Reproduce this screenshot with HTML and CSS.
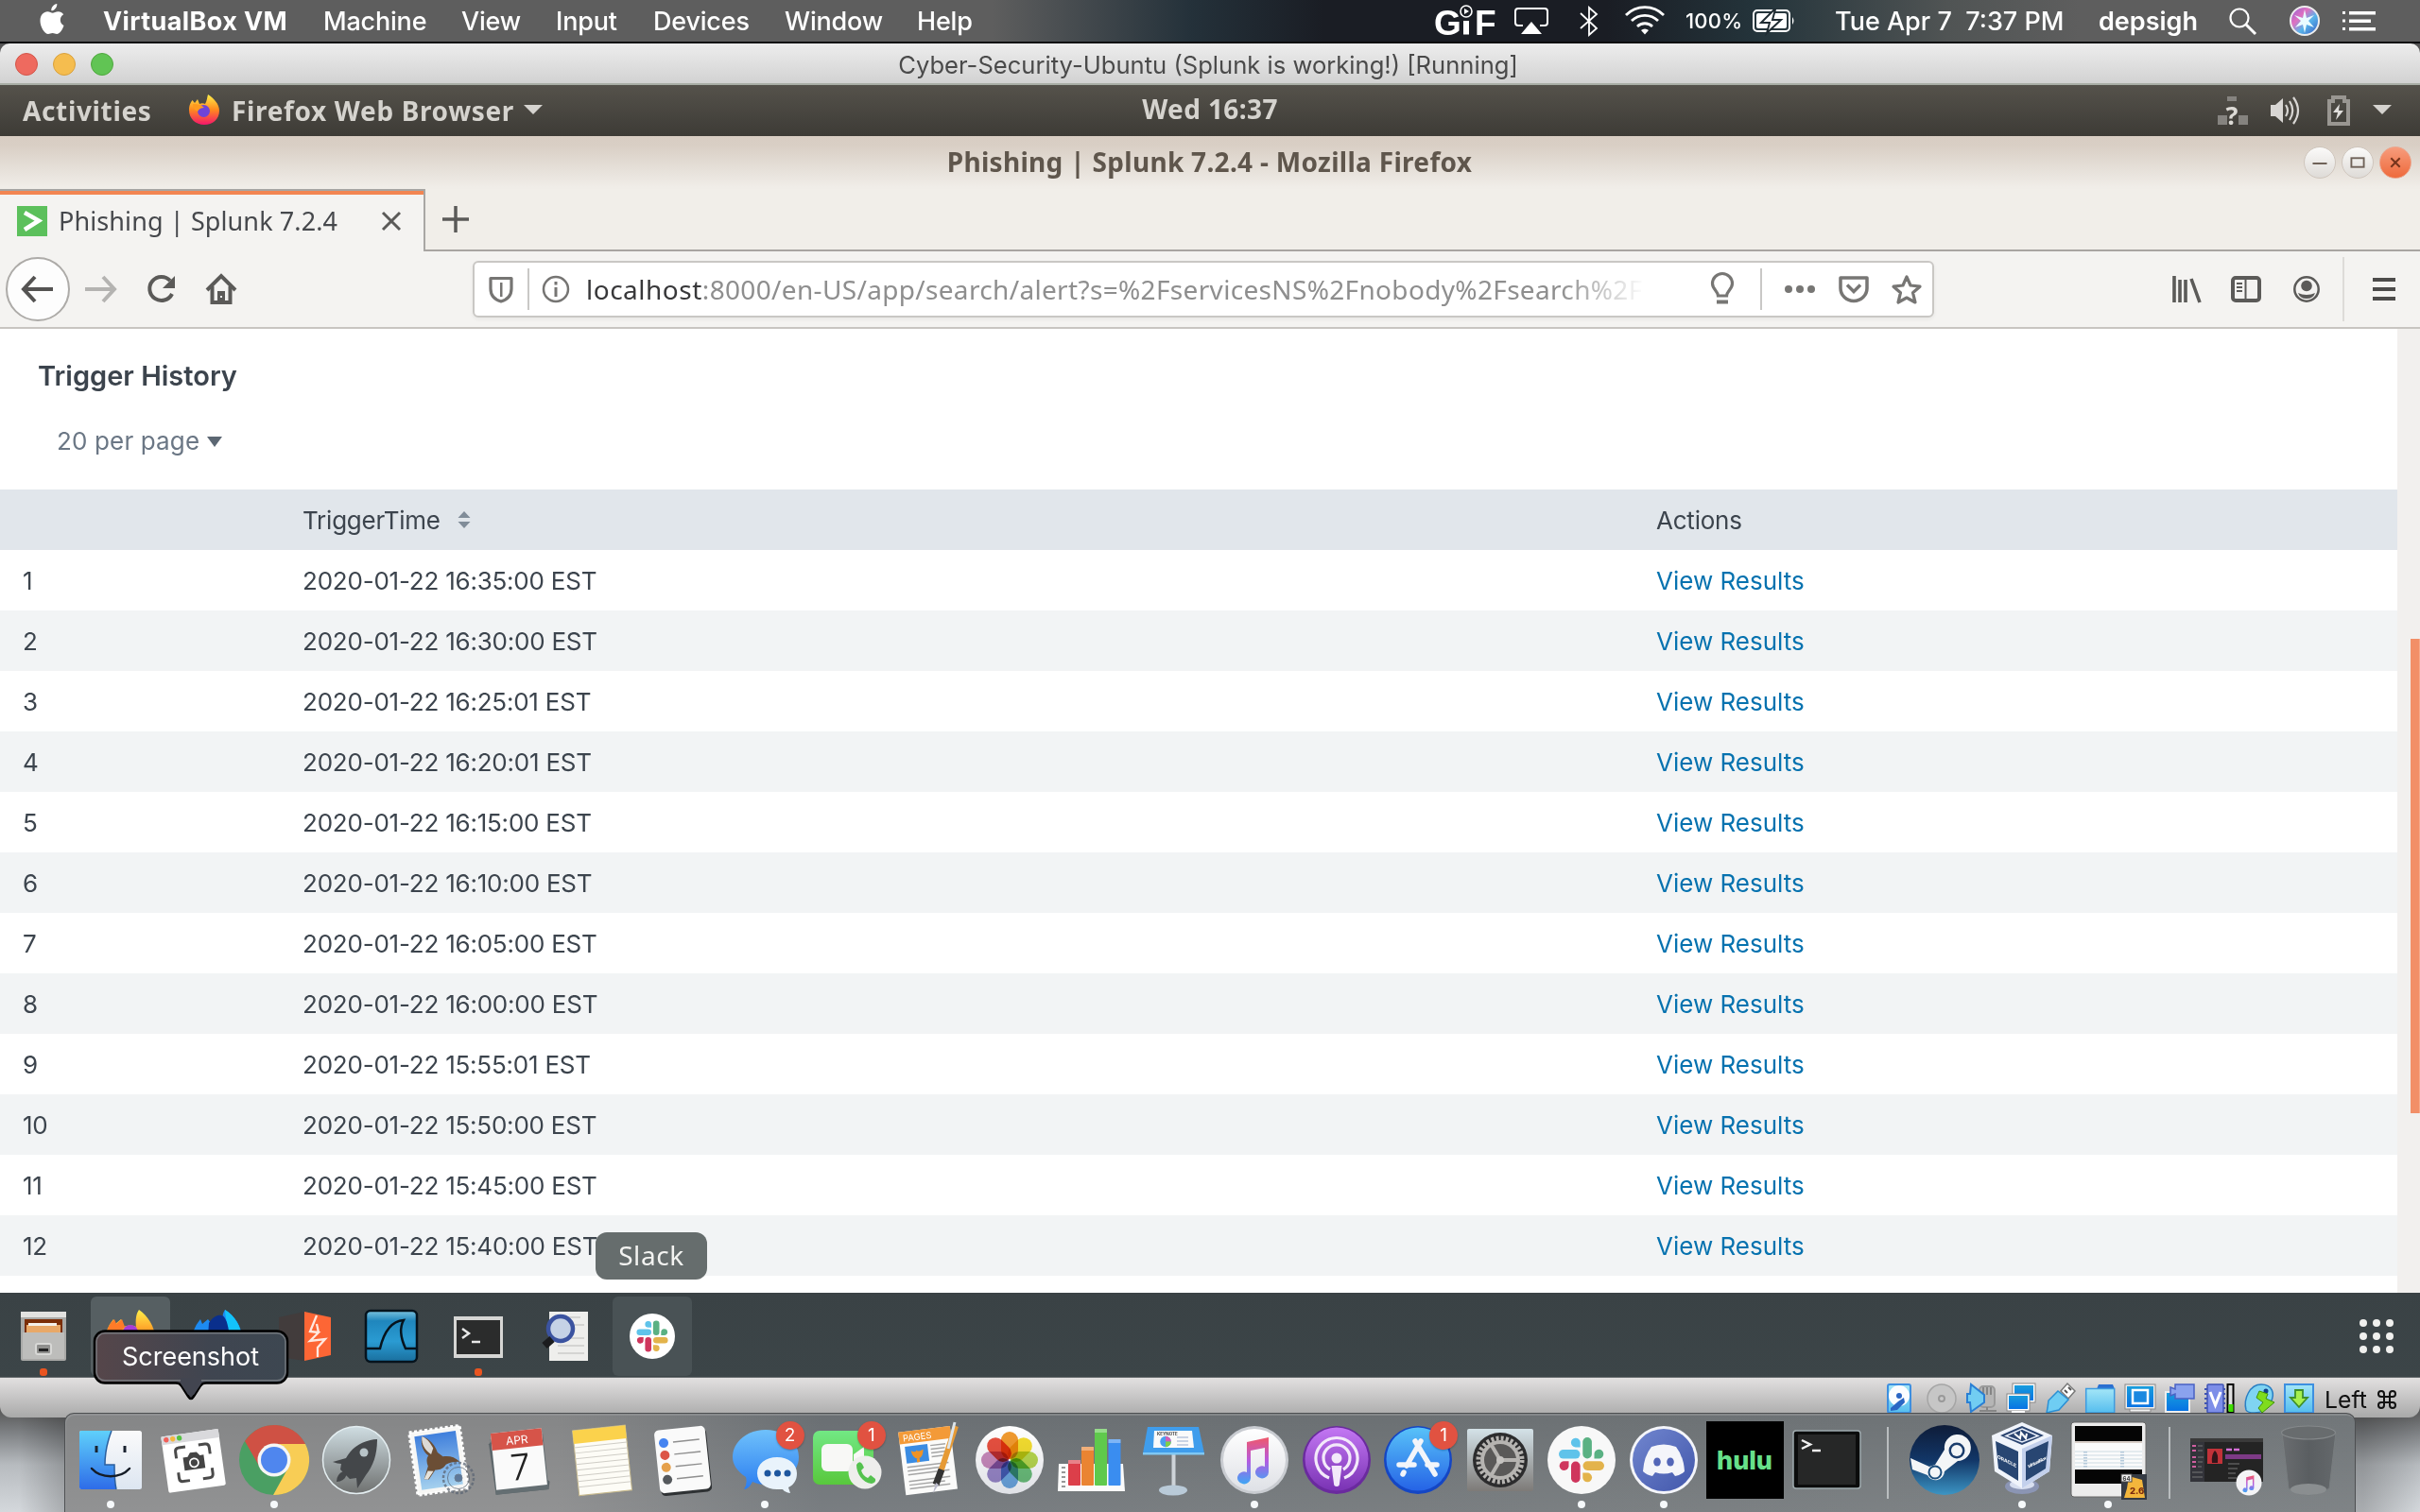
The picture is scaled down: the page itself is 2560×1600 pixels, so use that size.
FILE: index.html
```html
<!DOCTYPE html>
<html lang="en">
<head>
<meta charset="utf-8">
<title>Phishing | Splunk 7.2.4</title>
<link rel="stylesheet" href="styles.css">
</head>
<body>
<svg width="0" height="0" class="defs">
  <defs>
    <linearGradient id="gBlue" x1="0" y1="0" x2="0" y2="1"><stop offset="0" stop-color="#6fc1fb"/><stop offset="1" stop-color="#2b7df0"/></linearGradient>
    <linearGradient id="gFinder" x1="0" y1="0" x2="0" y2="1"><stop offset="0" stop-color="#5fd0fb"/><stop offset="1" stop-color="#2e6ce8"/></linearGradient>
    <linearGradient id="gFace" x1="0" y1="0" x2="0" y2="1"><stop offset="0" stop-color="#fafafb"/><stop offset="1" stop-color="#dde6f1"/></linearGradient>
    <linearGradient id="gRocket" x1="0" y1="0" x2="0" y2="1"><stop offset="0" stop-color="#cfdde2"/><stop offset="1" stop-color="#6f7170"/></linearGradient>
    <linearGradient id="gGreen" x1="0" y1="0" x2="0" y2="1"><stop offset="0" stop-color="#72e884"/><stop offset="1" stop-color="#58c83c"/></linearGradient>
    <linearGradient id="gPurple" x1="0" y1="0" x2="0" y2="1"><stop offset="0" stop-color="#c377f3"/><stop offset="1" stop-color="#7a33b4"/></linearGradient>
    <linearGradient id="gStore" x1="0" y1="0" x2="0" y2="1"><stop offset="0" stop-color="#58c2f9"/><stop offset="1" stop-color="#2563e6"/></linearGradient>
    <linearGradient id="gMetal" x1="0" y1="0" x2="0" y2="1"><stop offset="0" stop-color="#d4e2e8"/><stop offset="1" stop-color="#7d7a77"/></linearGradient>
    <linearGradient id="gWhite" x1="0" y1="0" x2="0" y2="1"><stop offset="0" stop-color="#ffffff"/><stop offset="1" stop-color="#dfe1e6"/></linearGradient>
    <linearGradient id="gNote" x1="0" y1="0" x2="0" y2="1"><stop offset="0" stop-color="#f0586a"/><stop offset=".5" stop-color="#b55ae0"/><stop offset="1" stop-color="#3ea6f5"/></linearGradient>
    <linearGradient id="gDiscord" x1="0" y1="0" x2="1" y2="1"><stop offset="0" stop-color="#7186cf"/><stop offset="1" stop-color="#4257ab"/></linearGradient>
    <linearGradient id="gSteam" x1="0" y1="0" x2="0" y2="1"><stop offset="0" stop-color="#0e1c38"/><stop offset=".5" stop-color="#123667"/><stop offset="1" stop-color="#3c95c4"/></linearGradient>
    <linearGradient id="gFox" x1="0" y1="0" x2="0" y2="1"><stop offset="0" stop-color="#fff04a"/><stop offset=".5" stop-color="#ff8a1e"/><stop offset="1" stop-color="#f5156c"/></linearGradient>
    <linearGradient id="gShark" x1="0" y1="0" x2="0" y2="1"><stop offset="0" stop-color="#7cc4e0"/><stop offset=".2" stop-color="#1f86bd"/><stop offset=".6" stop-color="#2a9bd2"/><stop offset="1" stop-color="#1a6f9e"/></linearGradient>
    <linearGradient id="gScreen" x1="0" y1="0" x2="0" y2="1"><stop offset="0" stop-color="#1a9fdc"/><stop offset="1" stop-color="#0670e4"/></linearGradient>
    <linearGradient id="gSky" x1="0" y1="0" x2="0" y2="1"><stop offset="0" stop-color="#a4e6f7"/><stop offset="1" stop-color="#55bdee"/></linearGradient>
    <linearGradient id="gStamp" x1="0" y1="0" x2="0" y2="1"><stop offset="0" stop-color="#3f7fdc"/><stop offset="1" stop-color="#a4d0ee"/></linearGradient>
    <linearGradient id="gTrash" x1="0" y1="0" x2="1" y2="0"><stop offset="0" stop-color="#6a6d70"/><stop offset=".5" stop-color="#5a5e61"/><stop offset="1" stop-color="#64686b"/></linearGradient>
    <linearGradient id="gTip" x1="0" y1="0" x2="1" y2="0"><stop offset="0" stop-color="#56464a"/><stop offset=".6" stop-color="#3f4550"/><stop offset="1" stop-color="#3d4751"/></linearGradient>
    <linearGradient id="gSiri" x1="0" y1="0" x2="1" y2="1"><stop offset="0" stop-color="#8a63d8"/><stop offset=".35" stop-color="#e070c0"/><stop offset=".6" stop-color="#58b4ea"/><stop offset="1" stop-color="#3757c0"/></linearGradient>
    <g id="slackMark">
      <g fill="#5fc3ea"><path d="M-1.300-13.500v-5.500a4.900 4.900 0 1 0-4.900 5.500z"/><rect x="-24" y="-11" width="22.500" height="9.600" rx="4.800"/></g>
      <g fill="#5ab183"><rect x="1.300" y="-24" width="9.600" height="22.500" rx="4.800"/><path d="M13.500-1.500h5.500a4.900 4.900 0 1 0-5.500-4.900z"/></g>
      <g fill="#e3b34b"><rect x="1.500" y="1.300" width="22.500" height="9.600" rx="4.800"/><path d="M1.300 13.500v5.500a4.900 4.900 0 1 0 4.900-5.500z"/></g>
      <g fill="#cf365d"><rect x="-11" y="1.500" width="9.600" height="22.500" rx="4.800"/><path d="M-13.500 1.300h-5.500a4.900 4.900 0 1 0 5.500 4.900z"/></g>
    </g>
    <g id="noteMark"><path d="M-8-19L15-24V13a7 6.500 0 1 1-4-6V-13L-4-10V19a7 6.500 0 1 1-4-6z" fill="url(#gNote)"/></g>
  </defs>
</svg>

<div class="screen">
  <header class="menubar">
    <svg class="apple" viewBox="0 0 26 32"><path d="M17.800 0c.3 3.800-3 7.500-6 7.300C11.400 3.800 14.600.400 17.800 0zM25 23c-1.800 5.300-4.700 9-7.300 9-1.800 0-2.600-1-4.600-1s-3 1-4.600 1C4.700 32 0 24.500 0 18c0-6.300 4-9.700 7.800-9.700 2.200 0 4 1.400 5.400 1.400 1.300 0 3.400-1.500 6-1.500 2 0 4.200 1 5.500 3-5 3-4 9.800.3 11.800z"/></svg>
    <nav>
      <span class="app">VirtualBox VM</span><span class="m2">Machine</span><span class="m3">View</span><span class="m4">Input</span><span class="m5">Devices</span><span class="m6">Window</span><span>Help</span>
    </nav>
    <div class="extras">
      <svg class="gif" viewBox="0 0 64 44"><text x="-1" y="36.500" class="giftext" textLength="27">G</text><text x="42" y="36.500" class="giftext">F</text><path d="M30 22h6v14.500h-6z"/><circle cx="33" cy="12" r="6" fill="none" stroke="#fff" stroke-width="1.600"/><path d="M31 9l5 3-5 3z"/></svg>
      <svg class="airplay" viewBox="0 0 36 44"><path d="M9 27H4a3 3 0 0 1-3-3V12a3 3 0 0 1 3-3h28a3 3 0 0 1 3 3v12a3 3 0 0 1-3 3h-5" fill="none" stroke="#fff" stroke-width="2"/><path d="M18 23l11 13H7z"/></svg>
      <svg class="bt" viewBox="0 0 20 44"><path d="M1 14l17 16-8 7V8l8 7L1 30" fill="none" stroke="#fff" stroke-width="1.800"/></svg>
      <svg class="wifi" viewBox="0 0 42 44"><g fill="none" stroke="#fff" stroke-width="2.800"><path d="M1 16a28 28 0 0 1 40 0"/><path d="M7 22a20 20 0 0 1 28 0"/><path d="M13 28a11.500 11.500 0 0 1 16 0"/></g><path d="M17 32a6 6 0 0 1 8 0l-4 4.500z"/></svg>
      <span class="pct">100%</span>
      <svg class="batt" viewBox="0 0 46 44"><rect x="1" y="11" width="38" height="22" rx="4" fill="none" stroke="#fff" stroke-width="2"/><path d="M42 18q3 4 0 8z"/><rect x="4" y="14" width="32" height="16" rx="2"/><path d="M23 10L9 24h9l-3 11 15-14h-9l3-11z" stroke="#1f2b32" stroke-width="2"/></svg>
      <span class="clock">Tue Apr 7&nbsp; 7:37 PM</span>
      <span class="user">depsigh</span>
      <svg class="find" viewBox="0 0 30 44"><circle cx="11" cy="19" r="9.500" fill="none" stroke="#fff" stroke-width="2.200"/><path d="M18 26l10 10" stroke="#fff" stroke-width="3"/></svg>
      <svg class="siri" viewBox="0 0 34 44"><circle cx="17" cy="22" r="15" fill="url(#gSiri)" stroke="#eee" stroke-width="2"/><path d="M17 10l2 9 8-3-6 6 6 7-8-3-2 9-2-9-8 3 6-7-7-6 9 3z" fill="#eafcff"/></svg>
      <svg class="list" viewBox="0 0 36 44"><path d="M0 12h3v3H0zM7 12h28v3.500H7zM0 20.500h3v3H0zM7 20.500h23v3.500H7zM0 29h3v3H0zM7 29h28v3.500H7z"/></svg>
    </div>
  </header>

  <div class="vmwin">
    <div class="vmtitle">
      <div class="lights"><i class="red"></i><i class="yel"></i><i class="grn"></i></div>
      <span>Cyber-Security-Ubuntu (Splunk is working!) [Running]</span>
    </div>

    <div class="topbar">
      <div class="tl">
        <span class="act">Activities</span>
        <svg class="fxs" viewBox="0 0 32 32"><path d="M16 32C7 32 0 25.500 0 16.500 0 11 2 8 3.500 6l2.500 3 3-4 2 5c2-1 4-1 6 0 2-3 2-7 3-10 6 4 12 10 12 17 0 9-7 15-16 15z" fill="url(#gFox)"/><circle cx="15.500" cy="17.500" r="6.500" fill="#6f44d8"/><path d="M4 10q8 0 12 4-5 0-7 4-5-2-5-8z" fill="#ff9a1e"/></svg>
        <span class="fxn">Firefox Web Browser</span>
        <svg class="tri" viewBox="0 0 20 10"><path d="M0 0h20L10 10z"/></svg>
      </div>
      <span class="tc">Wed 16:37</span>
      <div class="tr">
        <svg width="32" height="32" viewBox="0 0 32 32"><path d="M10 1h10v5H10zM0 21h10v10H0zM22 21h10v10H22z" fill="#85837f"/><text x="8.500" y="31" class="q">?</text></svg>
        <svg width="32" height="32" viewBox="0 0 32 32"><path d="M0 10h5l8-7v26l-8-7H0z" fill="#d8d6d3"/><g fill="none" stroke="#d8d6d3" stroke-width="2.200"><path d="M16 10q4 6 0 12"/><path d="M20 6q6.500 10 0 20"/><path d="M24 2q10 14 0 28"/></g></svg>
        <svg width="24" height="32" viewBox="0 0 24 32"><path d="M2 6h4V2h12v4h4v24H2z" fill="none" stroke="#999691" stroke-width="4"/><path d="M13 9L6 18h5l-2 8 8-10h-5z" fill="#e0dedb"/></svg>
        <svg class="tri" viewBox="0 0 20 10"><path d="M0 0h20L10 10z"/></svg>
      </div>
    </div>

    <div class="fftitle">
      <span>Phishing | Splunk 7.2.4 - Mozilla Firefox</span>
      <div class="wbtns">
        <svg viewBox="0 0 34 34" class="wb"><path d="M9 18h16" stroke="#6f6258" stroke-width="2"/></svg>
        <svg viewBox="0 0 34 34" class="wb"><rect x="10" y="12" width="14" height="10" fill="none" stroke="#6f6258" stroke-width="2"/></svg>
        <svg viewBox="0 0 34 34" class="wb close"><path d="M12 12l10 10M22 12L12 22" stroke="#76341c" stroke-width="2.200"/></svg>
      </div>
    </div>

    <div class="tabs">
      <div class="tab">
        <svg width="32" height="32" viewBox="0 0 32 32"><path d="M0 0h32v32H0z" fill="#5cc05c"/><path d="M8 7l15 8.500L8 25" fill="none" stroke="#fff" stroke-width="4.500"/></svg>
        <span>Phishing | Splunk 7.2.4</span>
        <svg width="20" height="20" viewBox="0 0 20 20"><path d="M1 1l18 18M19 1L1 19" stroke="#5b5a58" stroke-width="3"/></svg>
      </div>
      <div class="newtab"><svg width="28" height="28" viewBox="0 0 28 28"><path d="M14 0v28M0 14h28" stroke="#5b5a58" stroke-width="3.500"/></svg></div>
    </div>

    <div class="toolbar">
      <div class="back"><svg width="34" height="28" viewBox="0 0 34 28"><path d="M14 1L2 14l12 13M2 14h31" fill="none" stroke="#545352" stroke-width="4"/></svg></div>
      <svg class="fwd" viewBox="0 0 34 28"><path d="M20 1l12 13-12 13M32 14H1" fill="none" stroke="#b4b3b1" stroke-width="4"/></svg>
      <svg class="reload" viewBox="0 0 32 32"><path d="M25 7a12.500 12.500 0 1 0 2 14" fill="none" stroke="#5b5a58" stroke-width="4"/><path d="M30 2v13H17z" fill="#5b5a58"/></svg>
      <svg class="home" viewBox="0 0 34 32"><path d="M2 17L17 2l15 15" fill="none" stroke="#5b5a58" stroke-width="4"/><path d="M7.500 13v17h19V13" fill="none" stroke="#5b5a58" stroke-width="4"/><path d="M13 18h8v12h-8z" fill="#5b5a58"/><path d="M16 23h2v2h-2z" fill="#eee"/></svg>
      <div class="url">
        <svg class="shield" viewBox="0 0 26 30"><path d="M2 3.500h22v11C24 21 20 26 13 28 6 26 2 21 2 14.500z" fill="none" stroke="#767573" stroke-width="3.200" stroke-linejoin="round"/><path d="M12 8h2.500v15H12z" fill="#767573"/></svg>
        <i class="usep"></i>
        <svg class="info" viewBox="0 0 30 30"><circle cx="15" cy="15" r="13" fill="none" stroke="#767573" stroke-width="2.500"/><path d="M13.500 7h3v3.500h-3zM13.500 13h3v10h-3z" fill="#767573"/></svg>
        <div class="addr"><b>localhost</b>:8000/en-US/app/search/alert?s=%2FservicesNS%2Fnobody%2Fsearch%2F</div>
        <svg class="bulb" viewBox="0 0 26 34"><path d="M8.500 24c0-5-6-7-6-13a10.500 10.500 0 0 1 21 0c0 6-6 8-6 13z" fill="none" stroke="#777674" stroke-width="3.200"/><path d="M7 28.500h12v4H7z" fill="#777674"/></svg>
        <i class="usep"></i>
        <svg class="dots" viewBox="0 0 32 10"><g fill="#777674"><circle cx="4" cy="5" r="4"/><circle cx="16" cy="5" r="4"/><circle cx="28" cy="5" r="4"/></g></svg>
        <svg class="pocket" viewBox="0 0 32 28"><path d="M2 2h28v11a14 13.500 0 0 1-28 0z" fill="none" stroke="#777674" stroke-width="3.500" stroke-linejoin="round"/><path d="M9 9.500l7 7 7-7" fill="none" stroke="#777674" stroke-width="3.500"/></svg>
        <svg class="star" viewBox="0 0 32 32"><path d="M16 3l4 9 10 1.200-7.500 6.500L25 30l-9-5-9 5 2.500-10.300L2 13.200 12 12z" fill="none" stroke="#777674" stroke-width="3.200" stroke-linejoin="round"/></svg>
      </div>
      <div class="tools">
        <svg width="32" height="28" viewBox="0 0 32 28"><path d="M2 0v28M8 4v24M14 4v24M20 3l9 25" stroke="#5b5a58" stroke-width="3.600"/></svg>
        <svg width="32" height="28" viewBox="0 0 32 28"><rect x="2" y="2" width="28" height="24" rx="3" fill="none" stroke="#5b5a58" stroke-width="4"/><path d="M15.500 2v24M6 8h6M6 12h6M6 16h6" stroke="#5b5a58" stroke-width="2"/></svg>
        <svg width="28" height="28" viewBox="0 0 28 28"><circle cx="14" cy="14" r="12.700" fill="none" stroke="#5b5a58" stroke-width="2.500"/><circle cx="14" cy="10.500" r="5.800" fill="#5b5a58"/><path d="M5 18q4 2 9 2t9-2q-2 6-9 6t-9-6z" fill="#5b5a58"/></svg>
        <i class="tsep"></i>
        <svg width="24" height="24" viewBox="0 0 24 24"><path d="M0 2h24M0 12h24M0 22h24" stroke="#4c4b4a" stroke-width="4"/></svg>
      </div>
    </div>

    <div class="page">
      <main>
        <h3>Trigger History</h3>
        <div class="perpage">20 per page<svg width="16" height="12" viewBox="0 0 16 12"><path d="M0 1h16L8 12z"/></svg></div>
        <div class="row head"><span></span><span>TriggerTime<svg width="14" height="18" viewBox="0 0 14 18"><path d="M7 0l6.500 7H.500zM7 18l6.500-7H.500z" fill="#818d99"/></svg></span><span>Actions</span></div>
        <div class="row"><span>1</span><span>2020-01-22 16:35:00 EST</span><a>View Results</a></div>
        <div class="row"><span>2</span><span>2020-01-22 16:30:00 EST</span><a>View Results</a></div>
        <div class="row"><span>3</span><span>2020-01-22 16:25:01 EST</span><a>View Results</a></div>
        <div class="row"><span>4</span><span>2020-01-22 16:20:01 EST</span><a>View Results</a></div>
        <div class="row"><span>5</span><span>2020-01-22 16:15:00 EST</span><a>View Results</a></div>
        <div class="row"><span>6</span><span>2020-01-22 16:10:00 EST</span><a>View Results</a></div>
        <div class="row"><span>7</span><span>2020-01-22 16:05:00 EST</span><a>View Results</a></div>
        <div class="row"><span>8</span><span>2020-01-22 16:00:00 EST</span><a>View Results</a></div>
        <div class="row"><span>9</span><span>2020-01-22 15:55:01 EST</span><a>View Results</a></div>
        <div class="row"><span>10</span><span>2020-01-22 15:50:00 EST</span><a>View Results</a></div>
        <div class="row"><span>11</span><span>2020-01-22 15:45:00 EST</span><a>View Results</a></div>
        <div class="row"><span>12</span><span>2020-01-22 15:40:00 EST</span><a>View Results</a></div>
      </main>
      <aside class="scroll"><i></i></aside>
    </div>

    <div class="udock">
      <div class="slot run"><svg width="52" height="56" viewBox="-26 -28 52 56"><rect x="-24" y="-26" width="48" height="52" rx="2" fill="#a9a9a7"/><rect x="-24" y="-26" width="48" height="6" fill="#e2e2e0"/><rect x="-20" y="-18" width="40" height="14" fill="#7a2e08"/><path d="M-18-12h36v8h-36z" fill="#e8a868"/><path d="M-16-14h30v3h-30z" fill="#f3f0ea"/><rect x="-22" y="-4" width="44" height="28" fill="#bdbdbb"/><rect x="-8" y="8" width="16" height="11" rx="2" fill="#8f8f8d" stroke="#d8d8d6" stroke-width="2"/><path d="M-5 13H5v3H-5z" fill="#222"/></svg></div>
      <div class="slot on"><svg width="52" height="56" viewBox="-26 -28 52 56"><path d="M0 26C-15 26-26 16-26 1c0-8 4-14 8-19l2 5 6-5 3 8C-3-12 3-12 6-10 5-17 6-24 9-28 18-22 26-10 26 2 26 16 15 26 0 26z" fill="url(#gFox)"/><path d="M-24-5c0-6 4-10 7-13l2 5 6-5 3 8-8 8z" fill="#ff7b28"/><circle cx="0" cy="-4" r="8" fill="#a63bd8"/></svg></div>
      <div class="slot"><svg width="52" height="56" viewBox="-26 -28 52 56"><path d="M0 26C-15 26-26 16-26 1c0-8 4-14 8-19l2 5 6-5 3 4C0-20 3-20 6-19 5-22 6-25 8-28 18-22 26-10 26 2 26 16 15 26 0 26z" fill="#1d8bf2"/><path d="M-9-14C-3-24 6-24 8-19L18 0H-10z" fill="#0a2f8c"/><path d="M8-28C18-22 26-10 25 2L12 4C14-8 8-16 8-28z" fill="#13c3fa"/></svg></div>
      <div class="slot"><svg width="56" height="56" viewBox="-28 -28 56 56"><path d="M-27-20L0-26v52l-27-4z" fill="#423c3c"/><path d="M0-26L28-20V20L0 26z" fill="#fd6635"/><path d="M13-22L6-5l9 1-9 9 16-2-8 9v10M15-4l-2-9" fill="none" stroke="#ffe8df" stroke-width="2.300"/></svg></div>
      <div class="slot"><svg width="60" height="60" viewBox="-30 -30 60 60"><rect x="-27" y="-27" width="54" height="54" rx="5" fill="url(#gShark)" stroke="#06131d" stroke-width="2.500"/><path d="M-27 13h15C-8-4 0-16 13-17 9-10 9 0 15 13h12" fill="none" stroke="#06131d" stroke-width="2.500"/></svg></div>
      <div class="slot run"><svg width="54" height="48" viewBox="-27 -24 54 48"><rect x="-26" y="-21" width="52" height="44" fill="#d6d6d4"/><rect x="-23" y="-17" width="46" height="36" fill="#2b2c2c"/><path d="M-17-8l7 5-7 5M-7 6H2" fill="none" stroke="#e8e8e8" stroke-width="2.500"/></svg></div>
      <div class="slot"><svg width="56" height="56" viewBox="-28 -28 56 56"><rect x="-17" y="-26" width="41" height="52" fill="#eeeeec"/><path d="M-8-20h24M-8-12h28M0 2h20M-8 10h28M-8 18h28" stroke="#d4d4d2" stroke-width="2"/><circle cx="-5" cy="-8" r="13" fill="#c5d2e6" stroke="#3b53a0" stroke-width="4.500"/><path d="M-14 3l-8 7" stroke="#1b1c1e" stroke-width="8"/></svg></div>
      <div class="slot hov"><svg width="52" height="52" viewBox="-26 -26 52 52"><circle r="24" fill="#fff"/><use href="#slackMark" transform="scale(.69)"/></svg><span class="tip">Slack</span></div>
      <svg class="apps" viewBox="0 0 36 36"><g fill="#f0f0ee"><circle cx="4" cy="4" r="4"/><circle cx="18" cy="4" r="4"/><circle cx="32" cy="4" r="4"/><circle cx="4" cy="18" r="4"/><circle cx="18" cy="18" r="4"/><circle cx="32" cy="18" r="4"/><circle cx="4" cy="32" r="4"/><circle cx="18" cy="32" r="4"/><circle cx="32" cy="32" r="4"/></g></svg>
    </div>

    <div class="status">
      <svg viewBox="0 0 32 32"><rect x="1" y="1" width="24" height="30" rx="2" fill="url(#gSky)" stroke="#3d8fe0" stroke-width="2"/><circle cx="13" cy="13" r="11" fill="#fbfdff"/><circle cx="13" cy="13" r="3" fill="#2a66c4"/><path d="M4 26l8-7 6-4 1 5-8 8-7 1z" fill="#2a66c4"/></svg>
      <svg viewBox="0 0 32 32"><circle cx="16" cy="16" r="15" fill="#c6c6c6" stroke="#a5a5a5" stroke-width="1.500"/><circle cx="16" cy="16" r="3" fill="#c9c9c9" stroke="#999" stroke-width="2"/></svg>
      <svg viewBox="0 0 32 32"><rect x="14" y="3" width="16" height="22" rx="4" fill="#b5b5b5" stroke="#9a9a9a" stroke-width="2"/><path d="M18 4v8M22 4v8M26 4v8M14 29h18M22 25v4" stroke="#858585" stroke-width="2"/><path d="M1 11h3L5 1 19 12v8L5 30 4 20H1z" fill="#72cdf2" stroke="#2a7fd4" stroke-width="2"/></svg>
      <svg viewBox="0 0 32 32"><rect x="8" y="1" width="22" height="18" fill="url(#gScreen)" stroke="#fff" stroke-width="2"/><rect x="7" y="0" width="24" height="20" fill="none" stroke="#888"/><rect x="2" y="12" width="22" height="16" fill="url(#gScreen)" stroke="#fff" stroke-width="2"/><rect x="1" y="11" width="24" height="18" fill="none" stroke="#888"/><path d="M6 29h14v3H6z" fill="#fff"/></svg>
      <svg viewBox="0 0 32 32"><path d="M16 8l7-8 8 8-7 8z" fill="#fff" stroke="#777" stroke-width="1.500"/><path d="M20 7l3 3M24 4l3 3" stroke="#555" stroke-width="2"/><path d="M13 8l11 9-10 11-9 2-4 1 1-5 1-8z" fill="#6fcdf3" stroke="#2a8fd4" stroke-width="1.500"/></svg>
      <svg viewBox="0 0 32 32"><path d="M12 6l2-5h15l2 5z" fill="#2a6fd0"/><rect x=".7" y="5.500" width="30" height="25.500" fill="url(#gSky)" stroke="#3d9be0" stroke-width="1.500"/></svg>
      <svg viewBox="0 0 32 32"><path d="M5 25h22v5H5z" fill="#f2f2f2" stroke="#888"/><rect x="1" y="2" width="30" height="24" fill="url(#gScreen)" stroke="#eee" stroke-width="2"/><rect x="0" y="1" width="32" height="26" fill="none" stroke="#888"/><rect x="8" y="7" width="16" height="14" fill="#1a88e0" stroke="#fff" stroke-width="2.500"/></svg>
      <svg viewBox="0 0 32 32"><rect x="1" y="9" width="25" height="21" fill="url(#gScreen)" stroke="#eee" stroke-width="2"/><path d="M6 4l5 2V1h20v15H11v-5l-5 2z" fill="#8aa2ee" stroke="#4a62c4" stroke-width="1.500"/></svg>
      <svg viewBox="0 0 32 32"><path d="M0 6h22M0 11h22M0 16h22M0 21h22M0 26h22" stroke="#3f53b4" stroke-width="2"/><rect x="3" y="1" width="17" height="30" rx="1" fill="#7d8ee8" stroke="#3f53b4" stroke-width="1.500"/><path d="M6 9l5.500 14L17 9" fill="none" stroke="#fff" stroke-width="3"/><rect x="24.500" y="1" width="6" height="29" fill="#e0e0e0" stroke="#000" stroke-width="2"/><path d="M25.500 22h5v8h-5z" fill="#3fe000"/></svg>
      <svg viewBox="0 0 32 32"><path d="M2 28C-1 16 6 1 18 1s15 10 10 19-12 11-17 11-8-1-9-3z" fill="#7fd4f2" stroke="#2a7fc4" stroke-width="1.500"/><circle cx="23" cy="8" r="2.500" fill="#123f8c"/><path d="M16 8l9 3-2 5 9 4-13 11-4-5 5-6-7-5z" fill="#7fdc1e" stroke="#3f8f0a"/></svg>
      <svg viewBox="0 0 32 32"><rect x="1" y="1" width="30" height="30" fill="url(#gSky)" stroke="#3d8fe0" stroke-width="2"/><path d="M12 7h8v8h5l-9 10-9-10h5z" fill="#a6f04e" stroke="#3f8f2a" stroke-width="1.800"/></svg>
      <span>Left</span>
      <svg class="cmd" viewBox="0 0 20 20"><path d="M7 7h6v6H7zM7 7H4a3 3 0 1 1 3-3zM13 7V4a3 3 0 1 1 3 3zM13 13h3a3 3 0 1 1-3 3zM7 13v3a3 3 0 1 1-3-3z" fill="none" stroke="#111" stroke-width="2"/></svg>
    </div>
  </div>

  <div class="dock">
    <div class="cell run"><svg viewBox="-43 -49 86 104"><rect x="-33" y="-31" width="66" height="62" rx="2.500" fill="url(#gFace)"/><path d="M1-31C-4-18-6-6-6 5H4c0 9 0 17 2 26h-37a2 2 0 0 1-2-2v-58a2 2 0 0 1 2-2z" fill="url(#gFinder)"/><path d="M1-31C-4-18-6-6-6 5H4c0 9 0 17 2 26" fill="none" stroke="#2b5f9e" stroke-width="1.500"/><path d="M-15-15v7M15-15v7" stroke="#1a2330" stroke-width="3"/><path d="M-20 9C-10 20 10 20 20 9" fill="none" stroke="#151c26" stroke-width="2.500" stroke-linecap="round"/></svg></div>
    <div class="cell"><svg viewBox="-43 -49 86 104"><g transform="rotate(-8)"><rect x="-30" y="-29" width="61" height="60" rx="2" fill="#fff"/><path d="M-30-29h61v9h-61z" fill="#d9d9dc"/><circle cx="-25" cy="-25" r="2.700" fill="#f1605a"/><circle cx="-18" cy="-25" r="2.700" fill="#f5b83f"/><circle cx="-11" cy="-25" r="2.700" fill="#55c242"/><path d="M-17-4v-7q0-4 4-4h7M8-15h7q4 0 4 4v7M19 11v6q0 4-4 4H8M-6 21h-7q-4 0-4-4v-6" fill="none" stroke="#4a4a4a" stroke-width="3"/><path d="M-10-4h5l3-4h7l3 4h4v14h-22z" fill="#444"/><circle cx="1" cy="3" r="4.500" fill="#444" stroke="#fff" stroke-width="1.800"/></g></svg></div>
    <div class="cell run"><svg viewBox="-43 -49 86 104"><circle r="37" fill="#4a9f63"/><path d="M-31-20A37 37 0 0 1 33-17H0A17 17 0 0 0-15 8z" fill="#cf5144"/><path d="M33-17A37 37 0 0 1-1 37L15 8A17 17 0 0 0 3-17z" fill="#f8cd55"/><circle r="17.500" fill="#f6f6f4"/><circle r="14" fill="#4f86ee"/></svg></div>
    <div class="cell"><svg viewBox="-43 -49 86 104"><circle r="35.500" fill="url(#gRocket)" stroke="#e4eef1" stroke-width="1.500"/><path d="M22-22C6-21-5-13-11-2l-14 4q5 2 9 2l-1 6 10 10 7-1 1 11 9-14C18 6 22-6 22-22z" fill="#44474a"/><circle cx="8" cy="-8" r="4.500" fill="#b8c4c8"/><path d="M-14 12q-7 3-7 11 8 0 11-8z" fill="#44474a"/></svg></div>
    <div class="cell"><svg viewBox="-43 -49 86 104"><g transform="rotate(-8)"><rect x="-26" y="-33" width="54" height="67" fill="#f7f7f5" stroke="#fff" stroke-width="3" stroke-dasharray="3 2.500"/><rect x="-21" y="-28" width="44" height="57" fill="url(#gStamp)"/><path d="M-13-27c7 3 12 10 14 19l5 5c7 0 12 2 17 8-6-1-11-1-15 1-3 4-8 5-12 4l-8 9-5-1 6-13c-1-4-1-8 2-11-5-5-7-13-4-21z" fill="#6b4e35"/><path d="M-13-27c5 3 8 8 10 14l-3 6c-6-5-9-12-7-20z" fill="#dcdad6"/><path d="M-12 10l6 1-7 8-4-1z" fill="#e6e2da"/></g><g fill="none" stroke="#5c6674" opacity=".75"><circle cx="22" cy="19" r="16" stroke-width="2.500" stroke-dasharray="3 2"/><circle cx="22" cy="19" r="11.500"/><circle cx="22" cy="19" r="4" fill="#4a5f80"/></g></svg></div>
    <div class="cell"><svg viewBox="-43 -49 86 104"><g transform="rotate(-6)"><path d="M-30-20l6-6 54 52-2 8h-56z" fill="#5b6468"/><rect x="-28" y="-25" width="56" height="59" fill="#646e72"/><rect x="-27" y="-31" width="54" height="60" fill="#fafafa"/><path d="M-27-31h54v18h-54z" fill="#d65449"/><text class="apr" x="0" y="-17">APR</text><text class="seven" x="1" y="21">7</text></g></svg></div>
    <div class="cell"><svg viewBox="-43 -49 86 104"><g transform="rotate(-6)"><rect x="-27" y="-34" width="56" height="69" fill="#fdfcf6" stroke="#c7b98c"/><path d="M-27-34h56v14h-56z" fill="#fbd24c"/><path d="M-27-16h56M-27-10h56M-27-4h56M-27 2h56M-27 8h56M-27 14h56M-27 20h56M-27 26h56" stroke="#cfcdc6"/></g></svg></div>
    <div class="cell"><svg viewBox="-43 -49 86 104"><g transform="rotate(-6)"><rect x="-26" y="-31" width="54" height="67" rx="5" fill="#2f3234"/><rect x="-27" y="-34" width="54" height="67" rx="5" fill="#fafafa"/><circle cx="-18" cy="-20" r="5" fill="#4584f0"/><circle cx="-18" cy="-7" r="5" fill="#dc5547"/><circle cx="-18" cy="6" r="5" fill="#e5a04b"/><circle cx="-18" cy="19" r="5" fill="#55595d"/><path d="M-8-20h28M-8-7h28M-8 6h28M-8 19h28" stroke="#8f8f8f" stroke-width="1.500"/></g></svg></div>
    <div class="cell run"><svg viewBox="-43 -49 86 104"><path d="M1-32c20 0 35 13 35 29S21 26 1 26q-8 0-14-3-4 8-9 8 4-6 2-13C-29 12-34 5-34-3c0-16 15-29 35-29z" fill="url(#gBlue)"/><path d="M13-3c12 0 21 7 21 17 0 7-3 12-9 15l2 6q-6-1-8-4H13C1 31-8 24-8 14S1-3 13-3z" fill="#e9f3fb"/><circle cx="3" cy="14" r="3.500" fill="#1d569e"/><circle cx="13.500" cy="14" r="3.500" fill="#1d569e"/><circle cx="24" cy="14" r="3.500" fill="#1d569e"/></svg><em>2</em></div>
    <div class="cell"><svg viewBox="-43 -49 86 104"><rect x="-35" y="-31" width="64" height="57" rx="7" fill="url(#gGreen)"/><rect x="-26" y="-17" width="33" height="29" rx="6" fill="#f8f8f6"/><path d="M8-6l11-8v14H8z" fill="#f8f8f6"/><circle cx="20" cy="13" r="17.500" fill="#eeeeec"/><path d="M11 5q3-5 6-1l2 4-3 3q2 6 7 8l3-3 5 4q1 4-4 5C17 24 11 14 11 5z" fill="#55c24f"/></svg><em>1</em></div>
    <div class="cell"><svg viewBox="-43 -49 86 104"><g transform="rotate(-7)"><rect x="-28" y="-33" width="55" height="67" fill="#fbfbfa"/><path d="M-28-33h55v13h-55z" fill="#f39a38"/><text class="pgs" x="-24" y="-22.500">PAGES</text><rect x="-23" y="-17" width="24" height="18" fill="#3b8ce2"/><path d="M-17-12q5 3 6 0 2 3 7 0-1 9-6 9-6 0-7-9zM-12-3h3v4h-3z" fill="#f09325"/><path d="M4-15h16M4-11h15M4-7h16M4-3h12M-23 5h44M-23 9h40M-23 13h44M-23 20h44M-23 24h38M-23 28h43" stroke="#a5a5a5" stroke-width="1.500"/></g><path d="M29-36L12 16" stroke="#e69a35" stroke-width="6"/><path d="M28-40L21-12" stroke="#dce4ea" stroke-width="3"/><path d="M14 10L8 26" stroke="#333" stroke-width="7"/><path d="M8 24l-3 11 6-9z" fill="#bbc"/></svg></div>
    <div class="cell"><svg viewBox="-43 -49 86 104"><circle r="36" fill="url(#gWhite)"/><g class="petals"><rect x="-9" y="-30" width="18" height="29" rx="9" fill="#f29b2f"/><rect x="-9" y="-30" width="18" height="29" rx="9" transform="rotate(45)" fill="#f4dd2f"/><rect x="-9" y="-30" width="18" height="29" rx="9" transform="rotate(90)" fill="#b8d84e"/><rect x="-9" y="-30" width="18" height="29" rx="9" transform="rotate(135)" fill="#6cc07b"/><rect x="-9" y="-30" width="18" height="29" rx="9" transform="rotate(180)" fill="#6da8e0"/><rect x="-9" y="-30" width="18" height="29" rx="9" transform="rotate(225)" fill="#9a88c8"/><rect x="-9" y="-30" width="18" height="29" rx="9" transform="rotate(270)" fill="#c98abb"/><rect x="-9" y="-30" width="18" height="29" rx="9" transform="rotate(315)" fill="#e8503f"/></g></svg></div>
    <div class="cell"><svg viewBox="-43 -49 86 104"><path d="M-34 4h68l2 29h-71z" fill="#fbfbfb"/><path d="M-31 8h4M-31 13h4M-31 18h4M-31 23h4M-31 28h4" stroke="#777" stroke-width="1.500"/><rect x="-24" y="0" width="13" height="27" rx="1" fill="#dc3f4a"/><rect x="-10" y="-14" width="13" height="41" rx="1" fill="#ea8432"/><rect x="4" y="-33" width="13" height="60" rx="1" fill="#5fc94c"/><rect x="18.500" y="-22" width="13" height="49" rx="1" fill="#3a8df0"/><path d="M-24 0h13v4h-13zM-10-14H3v4h-13zM4-33h13v4H4zM18.500-22h13v4h-13z" fill="#fff" opacity=".35"/></svg></div>
    <div class="cell"><svg viewBox="-43 -49 86 104"><path d="M-1.500-10h4v42h-4z" fill="#cdd3d8"/><ellipse cx="0" cy="32" rx="15" ry="5.500" fill="#b9cad8"/><path d="M-27-35h54l6 28h-65z" fill="#3f9dec"/><path d="M-32-8h65v2.500h-65z" fill="#7fc8f4"/><path d="M-20-31h40l2 18h-43z" fill="#fafafa"/><text class="key" x="-17" y="-26">KEYNOTE</text><circle cx="-8" cy="-19.500" r="5.800" fill="#4a9ff0"/><path d="M-8-19.500v-5.800a5.800 5.800 0 0 1 5.800 5.800z" fill="#d35fb8"/><path d="M-8-19.500h5.800a5.800 5.800 0 0 1-5.800 5.800z" fill="#7fcf4a"/><path d="M4-24h12M4-20h12M4-16h12" stroke="#b9c6dd" stroke-width="1.500"/></svg></div>
    <div class="cell run"><svg viewBox="-43 -49 86 104"><circle r="36" fill="#c9ccd1"/><circle r="33" fill="url(#gWhite)"/><use href="#noteMark"/></svg></div>
    <div class="cell"><svg viewBox="-43 -49 86 104"><circle r="36" fill="#6a2a9e"/><circle cy="-1" r="33.500" fill="url(#gPurple)"/><g fill="none" stroke="#f3e9fa" stroke-width="3.200"><path d="M-8 19A22 22 0 1 1 8 19"/><path d="M-7 10A14 14 0 1 1 7 10"/></g><circle cy="-2" r="5.500" fill="#f3e9fa"/><path d="M-5.500 6h11L3 25a3 3 0 0 1-6 0z" fill="#f3e9fa"/></svg></div>
    <div class="cell"><svg viewBox="-43 -49 86 104"><circle r="36" fill="#1446c4"/><circle cy="-1" r="33.500" fill="url(#gStore)"/><g stroke="#f2f5fa" stroke-width="5.500" stroke-linecap="round"><path d="M3-20L-12 6M-3-20L18 15M-20 5h16M10 5h10M-15 13l-1 2"/></g></svg><em>1</em></div>
    <div class="cell"><svg viewBox="-43 -49 86 104"><rect x="-35" y="-33" width="70" height="66" rx="2" fill="url(#gMetal)"/><circle r="29" fill="#2c2c2d"/><circle r="23" fill="none" stroke="#b6b4b1" stroke-width="5" stroke-dasharray="3 2.160"/><circle r="19" fill="#5a5958" stroke="#b6b4b1" stroke-width="4"/><path d="M0 0h19M0 0l-10-17M0 0l-10 17" stroke="#b6b4b1" stroke-width="4"/><circle r="4" fill="#c5c3c0"/></svg></div>
    <div class="cell run"><svg viewBox="-43 -49 86 104"><circle r="36" fill="#f8f8f8"/><use href="#slackMark"/></svg></div>
    <div class="cell run"><svg viewBox="-43 -49 86 104"><circle r="36" fill="#f4f5fa"/><circle r="33" fill="url(#gDiscord)"/><path d="M-13-14q13-5 26 0 8 10 9 26-4 4-10 5l-3-4q-9 3-18 0l-3 4q-6-1-10-5 1-16 9-26z" fill="#f4f5fa"/><ellipse cx="-7" cy="2" rx="3.800" ry="4.500" fill="#5366b8"/><ellipse cx="7" cy="2" rx="3.800" ry="4.500" fill="#5366b8"/></svg></div>
    <div class="cell"><svg viewBox="-43 -49 86 104"><rect x="-41" y="-41" width="82" height="82" fill="#000"/><text class="hulu" x="-30" y="10" textLength="59">hulu</text></svg></div>
    <div class="cell"><svg viewBox="-43 -49 86 104"><rect x="-35" y="-31" width="71" height="61" rx="3" fill="#0b0c0c" stroke="#9fabae" stroke-width="1.500"/><rect x="-30" y="-27" width="61" height="53" fill="#262727"/><path d="M-26-21l9 4.500-9 4.500M-15-10h9" fill="none" stroke="#f0f0f0" stroke-width="2.500"/></svg></div>
    <div class="cell dsep s1"><i></i></div>
    <div class="cell steam"><svg viewBox="-43 -49 86 104"><circle r="37" fill="url(#gSteam)"/><path d="M-36-2l20 9 6-2L0-11A14 14 0 1 1 14 1L0 12a9.500 9.500 0 0 1-18 4l-16-6z" fill="#f3f5f7"/><circle cx="13" cy="-10" r="8.500" fill="#1b3d6c"/><circle cx="13" cy="-10" r="6" fill="#f3f5f7"/><circle cx="-10" cy="13" r="6.500" fill="none" stroke="#1b4d7c" stroke-width="2"/></svg></div>
    <div class="cell run"><svg viewBox="-43 -49 86 104"><ellipse cx="0" cy="28" rx="18" ry="8" fill="#8b95b4"/><ellipse cx="0" cy="26" rx="13" ry="5" fill="#d8dff0"/><path d="M0-40l32 14-3 38L0 30-29 12l-3-38z" fill="#f0f4fb"/><path d="M0-12l32-14-3 38L0 30z" fill="#c3d0ec"/><path d="M0-36l23 10L0-16l-23-10z" fill="#2a4470"/><path d="M-28-20L-4-9v31L-25 9zM28-20L4-9v31L25 9z" fill="#284672"/><path d="M0-33l17 7.500L0-19l-17-6.500z" fill="none" stroke="#e8eefa" stroke-width="1.500"/><path d="M-8-28l6 5 1-6 5 6 1-5" fill="none" stroke="#fff" stroke-width="2"/><text class="vb" transform="matrix(1 .5 0 1 -26 -2)" textLength="20">ORACLE</text><text class="vb" transform="matrix(1 -.5 0 1 6 9)" textLength="20">VirtualBox</text></svg></div>
    <div class="cell mini run"><svg viewBox="-43 -49 86 104"><rect x="-39" y="-40" width="79" height="79" rx="3" fill="#ececec" stroke="#666" stroke-width="1"/><rect x="-35" y="-36" width="71" height="61" fill="#050505"/><path d="M-35-20h71V10h-71z" fill="#fbfbfb"/><path d="M-35-20h71v2h-71z" fill="#d9cfc8"/><path d="M-35-9h71M-35-5h71M-35-1h71M-35 3h71M-35 7h71" stroke="#dde6ec" stroke-width="1.500"/><path d="M-24-9V8M15-9V8" stroke="#b5cadb" stroke-width="4" stroke-dasharray="1.500 1.500"/><rect x="14" y="15" width="27" height="27" fill="#353b44"/><path d="M22 17l14 4 3 19H17l3-10z" fill="#f3b63c"/><rect x="14" y="15" width="11" height="8" fill="#eee" stroke="#444"/><text class="n64" x="15.500" y="21.500">64</text><text class="n26" x="23" y="36">2.6</text></svg></div>
    <div class="cell dsep s2"><i></i></div>
    <div class="cell"><svg viewBox="-43 -49 86 104"><rect x="-38" y="-23" width="77" height="46" fill="#242424"/><path d="M-38-23h15v46h-15z" fill="#33343a"/><path d="M-38-23h77v4h-77z" fill="#3a3a3a"/><rect x="-20" y="-12" width="16" height="16" fill="#c23239"/><path d="M-12-10q4 3 3 13h-6q-1-9 3-13z" fill="#32151a"/><path d="M-1-6h38v5H-1z" fill="#7d3a86"/><path d="M0-11h6M8-11h6" stroke="#d56fd8" stroke-width="2.500"/><path d="M-36-15h4M-36-10h4M-36-3h4M-36 2h4M-36 7h4" stroke="#d05fa0" stroke-width="2"/><path d="M-30-15h5M-30-10h5M-30-3h6M-30 2h5M-30 7h4M-36 13h11M-36 18h11M2 4h12M2 9h10M2 14h8M2 19h9" stroke="#777" stroke-width="1.200"/><circle cx="24" cy="24" r="13.500" fill="#f4f4f6"/><use href="#noteMark" transform="translate(24 25) scale(.36)"/></svg></div>
    <div class="cell"><svg viewBox="-43 -49 86 104"><path d="M-28-29q28 8 57 0L22 30q-22 14-43 0z" fill="url(#gTrash)" stroke="#787d7f"/><ellipse cx="0" cy="-29" rx="28.500" ry="7" fill="#686c6e" stroke="#85898b" stroke-width="1.200"/><ellipse cx="0" cy="31" rx="19" ry="6" fill="#8a8e90"/></svg></div>
  </div>

  <div class="shot">
    <svg width="208" height="76" viewBox="0 0 208 76"><path d="M13 1.500h182a11 11 0 0 1 11 11v33a11 11 0 0 1-11 11h-75q-4 0-6 3l-7 11q-3 5-6 0l-7-11q-2-3-6-3H13a11 11 0 0 1-11-11v-33a11 11 0 0 1 11-11z" fill="url(#gTip)" stroke="#000" stroke-width="2.500"/><path d="M13 3.800h182a9 9 0 0 1 9 9v32a9 9 0 0 1-9 9h-182a9 9 0 0 1-9-9v-32a9 9 0 0 1 9-9z" fill="none" stroke="#81858a" stroke-width="1.500" opacity=".8"/><path d="M93 51h22v6l-8 12h-6l-8-12z" fill="#424550"/></svg>
    <span>Screenshot</span>
  </div>
</div>
</body>
</html>
```
FILE: styles.css
```css
* { box-sizing: border-box; }
body { margin: 0; background: #999; }
.defs { position: absolute; }
svg { display: block; flex: none; overflow: visible; }
i { font-style: normal; display: block; flex: none; }

.screen {
  position: relative;
  width: 2560px;
  height: 1600px;
  overflow: hidden;
  font-family: Inter, sans-serif;
  background: linear-gradient(90deg, #0000 0, #0000 20px, #0003 70px, #0003 2500px, #0000 2560px),
              linear-gradient(#555 1490px, #7c7f82 1515px, #b7bbbf 1550px, #d4d8dc 1600px);
}

/* macOS menu bar */
.menubar {
  display: flex;
  align-items: center;
  height: 46px;
  padding: 0 46px 0 42px;
  color: #fff;
  font-size: 27px;
  font-weight: 500;
  border-bottom: 2px solid #0b0c0e;
  background: linear-gradient(90deg, #5e5e5e 0, #5e5e5e 1050px, #24313a 1260px, #1a1d24 1400px, #1a1d24 1700px, #24343b 1860px, #505454 2060px, #5e5e5e 2200px);
}
.menubar svg { fill: #fff; height: 44px; }
.menubar .apple { width: 27px; height: 32px; margin-top: -4px; }
.menubar nav { display: flex; margin-left: 40px; letter-spacing: -.2px; white-space: nowrap; }
.menubar nav .app { width: 233px; font-weight: 700; letter-spacing: .4px; }
.m2 { width: 146px; } .m3 { width: 100px; } .m4 { width: 103px; } .m5 { width: 139px; } .m6 { width: 140px; }
.extras { display: flex; align-items: center; margin-left: auto; white-space: nowrap; }
.giftext { font: 800 37px "Liberation Sans", sans-serif; }
.gif { width: 64px; margin-right: 20px; }
.airplay { width: 36px; margin-right: 33px; }
.bt { width: 20px; margin-right: 28px; }
.wifi { width: 42px; margin-right: 22px; }
.pct { width: 71px; font-size: 22px; letter-spacing: .2px; }
.batt { width: 46px; margin-right: 41px; }
.clock { width: 279px; }
.user { width: 138px; font-weight: 600; }
.find { width: 30px; margin-right: 33px; }
.siri { width: 34px; margin-right: 23px; }
.list { width: 36px; }

/* VM window */
.vmwin { border-radius: 10px 10px 12px 12px; overflow: hidden; height: 1454px; }
.vmtitle {
  display: grid;
  grid-template-columns: 1fr auto 1fr;
  align-items: center;
  height: 44px;
  padding: 2px 16px 0;
  color: #4a4a4a;
  font-size: 25.600px;
  background: linear-gradient(#ededed, #d2d2d2);
  border-bottom: 2px solid #a9aea6;
}
.vmtitle span { position: relative; left: -2px; }
.lights { display: flex; gap: 16px; margin-top: -1px; }
.lights i { width: 24px; height: 24px; border-radius: 50%; }
.red { background: #ee6a5f; border: 1px solid #d25549; }
.yel { background: #f5bd4f; border: 1px solid #d8a03c; }
.grn { background: #61c454; border: 1px solid #4fa73e; }

.topbar {
  display: grid;
  grid-template-columns: 1fr auto 1fr;
  align-items: center;
  height: 54px;
  padding: 0 30px 0 24px;
  font: 700 28px "Noto Sans", sans-serif;
  color: #d5d3ce;
  letter-spacing: .65px;
  background: linear-gradient(#55524b, #3d3b36);
}
.tl, .tr { display: flex; align-items: center; }
.act { width: 175px; }
.fxs { width: 32px; height: 32px; margin: -2px 13px 0 1px; }
.fxn { width: 309px; }
.tri { width: 20px; height: 10px; margin-top: -2px; fill: #d5d3cf; }
.tc { letter-spacing: .4px; position: relative; left: 3px; top: -2px; }
.tr { justify-content: flex-end; gap: 26px; }
.tr svg:nth-child(1) { margin-right: -2px; }
.tr svg:nth-child(2) { margin-right: 2px; }
.tr svg:nth-child(3) { margin-right: -2px; }
.q { font: 700 27px "Noto Sans", sans-serif; fill: #dcdad5; }

.fftitle {
  display: grid;
  grid-template-columns: 1fr auto 1fr;
  align-items: center;
  height: 56px;
  padding-right: 9px;
  font: 700 28px "Noto Sans", sans-serif;
  letter-spacing: .3px;
  color: #5f564c;
  background: linear-gradient(#d8cdc3 0, #d9cfc5 10px, #f0ede8 54px);
}
.fftitle span { grid-column: 2; position: relative; left: 4px; top: -1px; }
.wbtns { display: flex; gap: 6px; justify-content: flex-end; }
.wb { width: 34px; height: 34px; border-radius: 50%; border: 1px solid #cfc6bd; background: linear-gradient(#fbfaf9, #dedbd7); }
.wb.close { background: linear-gradient(#f79c7c, #ee6a3c); border-color: #e9a68f; }

.tabs { display: flex; height: 66px; background: #f1eee9; }
.tab {
  display: flex;
  align-items: center;
  width: 450px;
  padding: 0 24px 0 18px;
  border-top: 2px solid #a7a5a3;
  border-right: 2px solid #a9a7a4;
  box-shadow: inset 0 4px #f28552;
  background: #f4f3f1;
  font: 400 27px "Noto Sans", sans-serif;
  letter-spacing: .1px;
  color: #46484c;
}
.tab span { flex: 1; margin: -2px 0 0 12px; }
.newtab { flex: 1; border-bottom: 2px solid #a9a5a2; padding: 18px 0 0 18px; }

.toolbar {
  display: flex;
  align-items: center;
  height: 82px;
  padding: 0 26px 0 6px;
  background: #f4f3f1;
  border-bottom: 2px solid #c8c5c1;
}
.back { display: grid; place-items: center; width: 68px; height: 68px; border-radius: 50%; border: 2px solid #adaba8; background: #fdfdfd; }
.fwd { width: 34px; height: 28px; margin-left: 15px; }
.reload { width: 32px; height: 32px; margin-left: 32px; }
.home { width: 34px; height: 32px; margin-left: 30px; }
.url {
  display: flex;
  align-items: center;
  width: 1546px;
  height: 60px;
  margin-left: 249px;
  padding-left: 15px;
  border: 2px solid #c9c7c4;
  border-radius: 6px;
  background: #fff;
  box-shadow: 0 2px 4px #0000000d;
}
.usep { width: 2px; height: 44px; background: #c9c8c6; }
.shield { width: 26px; height: 30px; margin-right: 15px; }
.info { width: 30px; height: 30px; margin: 0 17px 0 13px; }
.addr {
  width: 1120px;
  overflow: hidden;
  white-space: nowrap;
  font: 400 28px "Noto Sans", sans-serif;
  letter-spacing: .33px;
  color: #8e8e8e;
  -webkit-mask-image: linear-gradient(90deg, #000 1030px, #0000 1120px);
  mask-image: linear-gradient(90deg, #000 1030px, #0000 1120px);
}
.addr b { font-weight: 400; color: #38383a; letter-spacing: .5px; }
.bulb { width: 26px; height: 34px; margin: 0 27px 0 69px; }
.dots { width: 32px; height: 10px; margin-left: 24px; }
.pocket { width: 32px; height: 28px; margin-left: 25px; }
.star { width: 32px; height: 32px; margin-left: 24px; }
.tools { display: flex; align-items: center; margin-left: auto; }
.tools svg:nth-child(2) { margin: 0 34px 0 30px; }
.tsep { width: 2px; height: 68px; margin: 0 30px 0 24px; background: #dddbd8; }

/* page */
.page { display: flex; height: 1020px; background: #fff; }
main { width: 2536px; overflow: hidden; color: #3c444d; font-size: 26px; }
h3 { margin: 33px 0 0 40px; font-size: 29px; line-height: 34px; font-weight: 600; }
.perpage { display: flex; align-items: center; gap: 8px; margin: 33px 0 34px 60px; height: 36px; color: #6b7785; letter-spacing: .15px; }
.perpage svg { fill: #5c6773; margin-top: 1px; }
.row { display: grid; grid-template-columns: 296px 1432px 1fr; align-items: center; height: 64px; padding-left: 24px; letter-spacing: -.22px; }
.row:nth-child(odd) { background: #f2f4f5; }
.row.head { background: #e1e6eb; }
.head span { display: flex; align-items: center; gap: 18px; }
.row a { color: #0672af; letter-spacing: 0; }
.scroll { width: 24px; padding: 328px 0 0 14px; background: #f2f0ee; }
.scroll i { height: 502px; background: #f28f67; border-right: 1px solid #f6a988; }

/* Ubuntu dock */
.udock { display: flex; align-items: center; gap: 8px; height: 90px; padding: 0 28px 0 4px; border-bottom: 1px solid #666b6d; background: linear-gradient(#3a4245, #3c4548); }
.slot { position: relative; display: grid; place-items: center; width: 84px; height: 84px; margin-top: 2px; border-radius: 6px; }
.slot.on { background: #565f62; }
.slot.hov { background: #495255; }
.slot.run::after { content: ""; position: absolute; left: 38px; bottom: 0; width: 8px; height: 8px; border-radius: 3px; background: #e95420; }
.tip {
  position: absolute;
  left: -18px;
  top: -68px;
  width: 118px;
  height: 50px;
  border-radius: 12px;
  background: #666d6d;
  color: #f3f3f1;
  font: 400 28px/49px "Noto Sans", sans-serif;
  letter-spacing: .6px;
  text-align: center;
}
.apps { width: 36px; height: 36px; margin: 2px 0 0 auto; }

/* VM status bar */
.status { display: flex; gap: 10px; height: 42px; padding: 6px 25px 0 1996px; background: linear-gradient(#e2e0e0, #a9a9a9); }
.status svg { width: 32px; height: 32px; }
.status span { margin-left: 1px; font-size: 24.800px; line-height: 34px; color: #111; width: 46px; }
.status .cmd { width: 20px; height: 20px; margin-top: 7px; }

/* macOS dock */
.dock {
  position: relative;
  display: flex;
  width: 2424px;
  height: 105px;
  margin: -5px 0 0 68px;
  padding-left: 5px;
  border: 1px solid #4d4f51;
  border-bottom: 0;
  border-radius: 10px 10px 0 0;
  box-shadow: inset 1px 2px #9a9c9d88;
  background: linear-gradient(#0000, #ffffff1a), linear-gradient(90deg, #858687 0, #858687 520px, #6a6f73 800px, #6b7073 1400px, #717679 2424px);
}
.cell { position: relative; flex: none; width: 86.440px; height: 104px; display: flex; justify-content: center; }
.cell svg { width: 86px; height: 104px; }
.cell.run::after { content: ""; position: absolute; left: calc(50% - 4px); top: 92px; width: 8px; height: 8px; border-radius: 50%; background: #f6f9fb; }
.cell em {
  position: absolute;
  left: 55px;
  top: 8px;
  width: 30px;
  height: 30px;
  border-radius: 50%;
  background: #e15241;
  color: #fff;
  font: 400 19px/30px Inter, sans-serif;
  text-align: center;
  box-shadow: 0 1px 2px #0004;
}
.petals rect { mix-blend-mode: multiply; }
.dsep i { width: 2px; height: 76px; margin-top: 14px; background: #b9bdbf; }
.s1 { width: 43px; }
.steam { width: 77px; }
.mini { width: 96px; }
.s2 { width: 34px; }
.apr { font: 400 12px Inter, sans-serif; fill: #fff; text-anchor: middle; }
.seven { font: 300 38px Inter, sans-serif; fill: #222; text-anchor: middle; }
.pgs { font: 400 9.500px Inter, sans-serif; fill: #fff; }
.key { font: 700 4.500px Inter, sans-serif; fill: #444; }
.hulu { font: 800 27px Inter, sans-serif; fill: #67e08a; }
.vb { font: 700 5px Inter, sans-serif; fill: #fff; }
.n64 { font: 700 6px Inter, sans-serif; fill: #333; }
.n26 { font: 800 9.500px Inter, sans-serif; fill: #7a2a10; }

/* dock label */
.shot { position: absolute; left: 98px; top: 1407px; width: 208px; height: 76px; }
.shot span { position: absolute; left: 0; top: 11px; width: 207px; text-align: center; color: #fff; font-size: 27px; line-height: 36px; }
```
